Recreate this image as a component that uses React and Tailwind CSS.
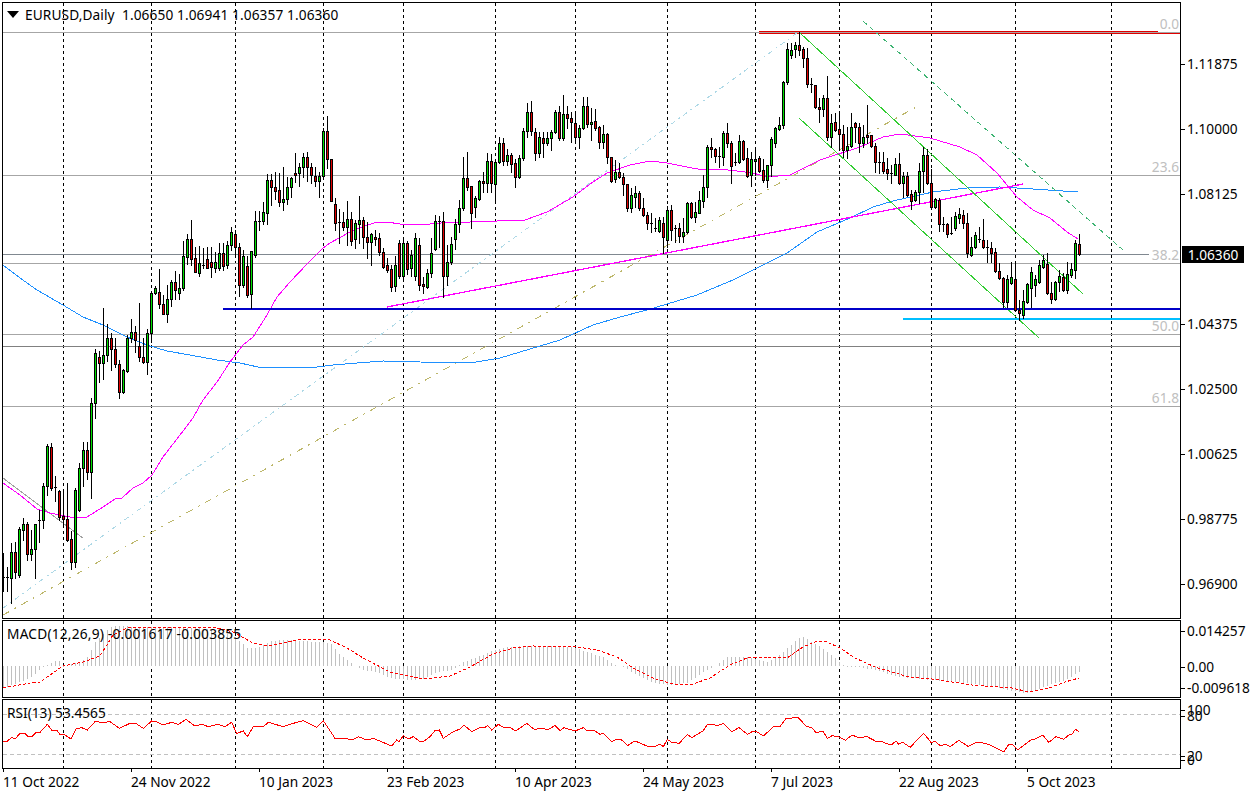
import React from 'react';

// [high, body top, body bottom, low, 1 = green / 0 = red], all in page pixels. bar k sits at x = 3 + 4k
const candles = [
  [553,577,578,591,0],[567,577,578,591,0],[543,552,578,603,1],[542,552,572,578,0],[527,529,575,577,1],[518,524,530,540,1],
  [522,524,554,560,0],[530,549,554,560,1],[524,524,549,578,1],[510,520,521,542,0],[483,486,520,528,1],[444,446,486,495,1],
  [443,447,488,490,0],[476,487,488,501,0],[490,491,517,520,0],[492,516,519,527,0],[483,519,540,541,0],[531,539,562,569,0],
  [488,490,562,567,1],[463,468,510,511,1],[442,450,468,486,1],[442,450,472,479,0],[398,403,472,498,1],[349,353,403,418,1],
  [351,357,363,382,0],[308,355,363,379,1],[324,338,355,361,1],[333,338,349,370,0],[338,349,364,367,0],[360,364,392,398,0],
  [369,370,392,393,1],[335,338,371,372,1],[319,332,338,342,1],[326,332,340,352,0],[303,346,357,361,0],[338,357,362,363,0],
  [329,333,362,374,1],[293,293,333,342,1],[286,288,293,294,1],[269,292,304,308,0],[295,304,314,314,0],[285,299,314,322,1],
  [280,282,299,306,1],[271,282,290,299,0],[274,288,293,299,1],[241,256,288,290,1],[234,239,257,264,1],[220,239,259,265,0],
  [247,258,272,272,0],[246,263,273,276,1],[248,265,266,268,0],[247,259,268,268,0],[247,262,267,277,0],[252,262,268,272,1],
  [243,253,268,270,1],[243,253,266,270,0],[241,245,265,268,1],[227,232,245,250,1],[230,234,247,255,0],[243,247,285,296,0],
  [250,256,285,287,1],[256,266,295,297,0],[251,251,294,308,1],[211,221,255,257,1],[211,221,222,230,0],[202,212,221,224,1],
  [174,180,213,224,1],[174,180,187,205,0],[172,187,191,199,0],[173,190,202,206,0],[167,199,202,210,1],[177,187,199,204,1],
  [177,178,187,197,1],[153,173,175,182,0],[163,167,173,186,1],[153,157,167,177,1],[152,157,167,181,0],[163,167,175,183,0],
  [167,176,181,186,0],[172,176,181,197,1],[128,131,176,179,1],[116,131,159,168,0],[159,159,201,201,0],[198,204,223,230,0],
  [209,222,223,243,0],[212,222,227,230,0],[201,219,227,245,1],[212,219,241,245,0],[220,223,239,248,1],[196,220,224,243,1],
  [217,220,237,248,0],[222,237,242,258,0],[233,234,242,265,1],[230,237,239,245,0],[233,238,252,255,0],[248,252,267,268,0],
  [258,265,270,272,0],[265,269,287,291,0],[256,265,286,291,1],[240,243,276,278,0],[239,243,276,280,1],[241,243,269,274,0],
  [250,255,268,276,1],[233,238,276,280,1],[238,245,285,290,0],[277,284,286,293,0],[269,273,287,288,1],[238,253,273,277,1],
  [215,221,249,250,1],[216,221,222,247,0],[212,221,276,297,0],[245,262,276,285,1],[237,244,262,264,1],[219,224,239,249,1],
  [200,208,224,232,1],[157,178,208,210,1],[152,178,187,190,0],[186,186,213,228,0],[196,198,207,217,1],[180,181,199,200,1],
  [172,181,183,192,0],[153,161,183,192,1],[154,161,183,192,0],[160,162,184,203,1],[137,143,162,163,1],[138,143,161,165,0],
  [149,155,161,165,1],[153,155,164,172,0],[159,163,177,187,0],[155,158,177,178,1],[128,131,158,160,1],[103,112,131,137,1],
  [101,112,131,135,0],[128,132,153,160,0],[132,137,153,157,1],[132,138,143,157,0],[132,138,143,145,1],[130,132,138,150,1],
  [110,112,132,133,1],[106,112,138,140,0],[95,114,138,140,1],[106,114,118,128,0],[112,118,122,142,0],[112,123,137,143,0],
  [125,128,137,148,1],[97,106,128,129,1],[97,106,124,127,0],[108,122,124,140,1],[109,121,128,130,0],[126,127,142,148,0],
  [125,134,142,148,1],[133,134,157,163,0],[157,157,181,182,0],[160,172,179,182,1],[163,172,177,178,0],[173,177,184,195,0],
  [184,184,208,211,0],[188,195,208,212,1],[186,193,197,207,1],[191,193,208,210,0],[198,208,215,216,0],[212,215,223,229,0],
  [213,223,224,232,0],[218,228,229,231,0],[217,220,231,232,1],[217,223,237,253,0],[206,210,240,247,1],[205,210,230,240,0],
  [225,228,229,242,0],[223,228,236,242,0],[218,232,236,242,1],[202,203,232,233,1],[202,203,217,218,0],[202,212,217,222,1],
  [191,200,213,213,1],[175,187,201,207,1],[145,147,187,197,1],[138,147,149,157,0],[148,149,156,162,0],[147,156,157,167,0],
  [131,133,157,165,1],[123,133,143,147,0],[141,143,166,183,0],[153,162,163,165,0],[135,141,162,163,1],[140,141,159,160,0],
  [148,158,176,177,0],[152,159,175,186,1],[150,159,161,175,1],[156,158,171,172,0],[159,170,180,182,0],[165,165,180,187,1],
  [137,139,165,176,1],[127,128,143,147,1],[117,125,129,130,1],[81,82,125,128,1],[43,49,82,84,1],[43,50,55,58,1],
  [42,45,49,57,1],[32,45,50,55,0],[47,49,58,67,0],[48,58,84,87,0],[78,84,85,92,0],[85,85,107,108,0],
  [98,107,109,122,0],[95,98,109,116,1],[76,98,137,140,0],[114,123,137,147,1],[113,122,130,131,0],[113,129,134,150,0],
  [125,134,150,157,0],[127,146,150,158,1],[113,127,146,147,1],[122,123,127,142,0],[123,127,143,152,0],[125,137,143,147,1],
  [105,135,137,143,0],[135,135,146,147,0],[143,146,162,172,0],[152,162,163,173,0],[152,162,171,173,0],[158,169,173,179,0],
  [165,173,174,183,0],[158,164,175,175,1],[153,164,183,184,0],[172,176,183,197,1],[172,176,195,196,0],[190,194,201,209,0],
  [190,192,200,201,1],[163,171,192,203,1],[147,155,171,192,1],[149,155,183,184,0],[169,183,207,208,0],[198,199,207,208,1],
  [198,200,224,231,0],[217,224,225,231,0],[223,224,234,237,0],[217,233,234,234,0],[212,216,228,230,1],[208,214,218,223,1],
  [210,215,223,228,0],[213,223,253,257,0],[237,247,255,256,1],[232,235,247,248,1],[227,239,240,242,0],[219,240,247,248,0],
  [240,247,248,262,0],[242,248,253,262,0],[248,252,271,272,0],[263,271,278,279,0],[277,278,302,307,0],[275,279,302,307,1],
  [262,277,283,284,1],[263,279,310,310,0],[300,310,313,320,0],[290,301,315,318,1],[283,284,302,303,1],[267,272,288,307,1],
  [275,279,285,296,1],[260,265,282,283,1],[255,260,267,268,1],[253,264,293,294,0],[282,293,299,303,0],[281,282,299,300,1],
  [270,276,282,291,1],[273,277,290,291,0],[262,274,290,293,1],[263,269,275,277,1],[240,243,270,278,1],[234,244,254,255,0],
];

const pinkMa = [[3,483],[20,495],[37,509],[50,513],[70,517],[87,517],[103,507],[115,499],[122,498],[133,488],[143,483],[152,475],[163,457],[180,435],[193,418],[203,400],[217,382],[230,362],[243,345],[253,337],[267,315],[277,297],[290,282],[308,263],[323,248],[330,243],[350,232],[367,225],[378,222],[387,222],[400,224],[430,224],[453,222],[470,222],[497,221],[525,220],[547,212],[573,197],[593,182],[607,173],[630,165],[650,161],[667,163],[687,167],[703,170],[720,169],[753,173],[767,177],[790,175],[820,160],[860,147],[883,137],[900,134],[930,138],[960,147],[977,155],[997,173],[1017,197],[1033,210],[1050,218],[1067,232],[1078,239]];
const blueMa = [[3,265],[20,278],[37,290],[63,305],[83,317],[103,325],[127,337],[147,345],[167,351],[190,355],[217,360],[240,363],[258,367],[317,367],[333,365],[357,363],[383,361],[420,362],[470,363],[500,358],[520,352],[560,340],[593,325],[620,317],[647,310],[667,304],[697,295],[733,280],[755,269],[787,253],[817,232],[850,218],[873,207],[893,201],[933,192],[967,188],[1000,187],[1033,189],[1078,192]];

const macdBars = [[3,688],[17,683],[30,678],[43,667],[50,663],[58,659],[62,667],[67,665],[80,662],[88,656],[95,642],[107,630],[113,626],[147,627],[200,628],[233,635],[247,648],[257,648],[270,641],[287,640],[317,642],[330,643],[340,655],[353,665],[363,670],[377,672],[390,678],[410,680],[423,679],[437,672],[453,670],[463,662],[480,656],[493,650],[507,647],[530,646],[573,647],[587,652],[603,657],[613,665],[623,667],[633,673],[653,683],[670,685],[687,683],[703,672],[713,667],[727,657],[747,657],[767,662],[783,652],[797,639],[803,637],[820,647],[835,658],[845,667],[859,667],[875,670],[899,677],[932,680],[965,683],[999,688],[1022,693],[1032,692],[1049,685],[1065,680],[1079,672]];
const macdSignal = [[3,688],[30,683],[40,682],[63,666],[83,662],[100,656],[113,635],[127,628],[213,627],[233,632],[253,643],[267,646],[283,643],[300,639],[330,640],[347,648],[363,658],[390,672],[423,679],[450,676],[470,667],[493,654],[513,648],[533,646],[577,647],[597,650],[617,657],[633,668],[653,678],[673,684],[693,684],[710,678],[730,665],[747,658],[767,657],[787,658],[803,647],[817,641],[827,642],[840,648],[855,658],[875,667],[909,677],[932,679],[972,685],[1012,688],[1029,692],[1049,688],[1065,682],[1079,678]];

const rsiA = [[8,380],[20,380],[35,367],[45,372],[60,355],[75,355],[85,365],[95,365],[108,352],[120,352],[142,328],[155,345],[170,345],[180,358],[195,360],[213,372],[228,342],[245,338],[262,345],[285,320],[310,322],[330,320],[358,340],[390,325],[410,327],[430,340],[455,318],[470,320],[490,330],[515,322],[535,328],[558,313],[585,333],[605,328],[625,335],[655,328],[675,335],[695,322],[710,355],[730,348],[742,365],[760,335],[790,335],[805,322],[850,335],[880,325],[910,317],[950,337],[970,317],[1005,370],[1035,370],[1055,375],[1075,365],[1100,375],[1120,370],[1175,393],[1190,375],[1197,380],[1210,362],[1225,372],[1240,365],[1260,380]];
const rsiB = [[10,380],[30,365],[45,347],[58,345],[70,370],[100,350],[120,342],[132,330],[155,350],[180,337],[195,337],[203,331],[215,345],[235,328],[250,337],[270,337],[287,348],[320,325],[345,345],[355,340],[385,343],[405,332],[420,347],[432,338],[465,348],[490,338],[500,346],[522,346],[540,358],[550,355],[575,380],[590,373],[605,375],[623,392],[640,380],[650,380],[685,395],[705,395],[720,387],[730,395],[742,373],[755,382],[778,385],[802,358],[815,368],[850,347],[862,328],[880,328],[890,333],[910,325],[935,350],[957,338],[982,358],[1000,348],[1010,350],[1030,363],[1050,345],[1060,335],[1080,335],[1098,310],[1135,308],[1160,335],[1175,337],[1187,352],[1210,350],[1222,370]];
const rsiC = [[0,362],[20,365],[40,376],[60,360],[80,368],[105,365],[130,378],[150,380],[170,388],[180,388],[192,378],[200,388],[212,382],[235,397],[255,375],[275,355],[297,382],[310,380],[325,392],[340,388],[355,395],[380,376],[408,394],[432,382],[450,383],[470,388],[515,411],[530,389],[540,388],[558,404],[600,372],[610,372],[632,360],[650,382],[672,365],[695,373],[710,360],[720,358],[730,343],[740,349]];
// rsi points were read off three 3x crops, back to page pixels here
const rsi = [
  ...rsiA.map(([x, y]) => [x / 3, 615 + y / 3]),
  ...rsiB.map(([x, y]) => [420 + x / 3, 615 + y / 3]),
  ...rsiC.map(([x, y]) => [832 + x / 3, 615 + y / 3]),
];

const gridX = [63, 151, 235, 323, 403, 495, 575, 667, 755, 839, 931, 1015, 1111];
const priceLabels = [['1.11875', 64], ['1.10000', 129], ['1.08125', 194], ['1.04375', 324], ['1.02500', 389], ['1.00625', 454], ['0.98775', 519], ['0.96900', 584]];
const fibLabels = [['0.0', 24], ['23.6', 167], ['38.2', 255], ['50.0', 326], ['61.8', 398]];
const macdLabels = [['0.014257', 631], ['0.00', 667], ['-0.009618', 688]];
const rsiLabels = [['100', 710], ['80', 716], ['20', 756], ['0', 760]];
const dates = [['11 Oct 2022', 3], ['24 Nov 2022', 131], ['10 Jan 2023', 259], ['23 Feb 2023', 387], ['10 Apr 2023', 515], ['24 May 2023', 643], ['7 Jul 2023', 771], ['22 Aug 2023', 899], ['5 Oct 2023', 1027]];

const pts = (list) => list.map(([x, y]) => `${x},${y}`).join(' ');

function interp(list, x) {
  for (let i = 1; i < list.length; i++) {
    if (x <= list[i][0]) {
      const [x0, y0] = list[i - 1];
      const [x1, y1] = list[i];
      return y0 + ((y1 - y0) * (x - x0)) / (x1 - x0);
    }
  }
  return list[list.length - 1][1];
}

function Grid({ y1, y2 }) {
  return gridX.map(x => (
    <line key={x} x1={x + 0.5} x2={x + 0.5} y1={y1} y2={y2} stroke="#000" strokeDasharray="3 3" />
  ));
}

function Candle({ k, c }) {
  const x = 3 + 4 * k;
  const [high, top, bot, low, up] = c;
  const h = bot - top;
  return (
    <g>
      <rect x={x} y={high} width="1" height={low - high + 1} fill="#000" />
      {h <= 1
        ? <rect x={x - 1} y={top} width="3" height="1" fill="#000" />
        : <>
            <rect x={x - 1} y={top} width="3" height={h + 1} fill="#000" />
            <rect x={x} y={top + 1} width="1" height={h - 1} fill={up ? '#00e000' : '#e00000'} />
          </>}
    </g>
  );
}

function MainChart() {
  return (
    <svg viewBox="3 3 1177 615" shapeRendering="crispEdges" className="block w-[1177px] h-[615px]">
      <Grid y1={3} y2={618} />
      {[175, 263, 334, 406].map(y => <rect key={y} x="3" y={y} width="1177" height="1" fill="#a6a6a6" />)}
      <rect x="3" y="32" width="1177" height="1" fill="#a6a6a6" />
      <rect x="3" y="254" width="1146" height="1" fill="#808890" />
      <rect x="3" y="346" width="1177" height="1" fill="#808080" />
      <rect x="759" y="31" width="399" height="1" fill="#e00000" />
      <rect x="759" y="33" width="421" height="1" fill="#e00000" />

      <line x1="3" y1="608" x2="797" y2="33" stroke="#add8e6" strokeDasharray="5 4 2 4" />
      <line x1="3" y1="615" x2="918" y2="106" stroke="#bdb76b" strokeDasharray="7 6 2 6" />
      <line x1="3" y1="478" x2="83" y2="538" stroke="#a0a0a0" />
      <polyline points={pts(blueMa)} fill="none" stroke="#1e90ff" />
      <polyline points={pts(pinkMa)} fill="none" stroke="#ff00ff" />
      <line x1="387" y1="307" x2="1023" y2="184" stroke="#ff00ff" strokeWidth="1.3" />
      <line x1="800" y1="33" x2="1083" y2="294" stroke="#32cd32" />
      <line x1="799" y1="118" x2="1039" y2="338" stroke="#32cd32" />
      <line x1="863" y1="21" x2="1123" y2="250" stroke="#3cb371" strokeDasharray="5 4" />
      <rect x="223" y="308" width="957" height="2" fill="#0000c8" />
      <rect x="903" y="318" width="277" height="2" fill="#00bfff" />

      {candles.map((c, k) => <Candle key={k} k={k} c={c} />)}
    </svg>
  );
}

function MacdChart() {
  return (
    <svg viewBox="3 621 1177 76" shapeRendering="crispEdges" className="block w-[1177px] h-[76px]">
      <Grid y1={621} y2={697} />
      {candles.map((_, k) => {
        const x = 3 + 4 * k;
        const y = interp(macdBars, x);
        return <line key={k} x1={x + 0.5} x2={x + 0.5} y1="666" y2={y} stroke="#c0c0c0" />;
      })}
      <polyline points={pts(macdSignal)} fill="none" stroke="#ff0000" strokeDasharray="3 2" />
    </svg>
  );
}

function RsiChart() {
  return (
    <svg viewBox="3 700 1177 68" shapeRendering="crispEdges" className="block w-[1177px] h-[68px]">
      <Grid y1={700} y2={768} />
      <line x1="3" x2="1180" y1="714.5" y2="714.5" stroke="#c0c0c0" strokeDasharray="4 3" />
      <line x1="3" x2="1180" y1="754.5" y2="754.5" stroke="#c0c0c0" strokeDasharray="4 3" />
      <polyline points={pts(rsi)} fill="none" stroke="#ff0000" />
    </svg>
  );
}

// right hand scale, y values are page pixels so top is relative to the row
function Axis({ labels, rowTop }) {
  return (
    <div className="relative w-[71px]">
      {labels.map(([text, y]) => (
        <div key={text} className="absolute left-0 flex items-center h-0" style={{ top: y - rowTop }}>
          <span className="w-[4px] h-px bg-black" />
          <span className="ml-[2px] whitespace-nowrap">{text}</span>
        </div>
      ))}
    </div>
  );
}

export default function App() {
  return (
    <div className="w-[1252px] h-[795px] overflow-hidden bg-white pl-[2px] pt-[2px] text-black text-[13.7px] leading-none font-['Noto_Sans',sans-serif]">
      {/* price pane */}
      <div className="flex h-[617px]">
        <div className="relative w-[1179px] border border-black">
          <MainChart />
          <div className="absolute left-[4px] top-[5px] flex items-center gap-[6px] whitespace-nowrap tracking-[0.1px]">
            <span className="w-0 h-0 border-x-[6px] border-x-transparent border-t-[7px] border-t-black" />
            <span>EURUSD,Daily&nbsp;&nbsp;1.06650 1.06941 1.06357 1.06360</span>
          </div>
          {fibLabels.map(([text, y]) => (
            <span key={text} className="absolute right-[1px] text-[#c0c0c0] -translate-y-1/2" style={{ top: y - 3 }}>{text}</span>
          ))}
        </div>
        <div className="relative">
          <Axis labels={priceLabels} rowTop={2} />
          <div className="absolute left-[1px] top-[244px] w-[62px] h-[17px] bg-black text-white flex items-center justify-center">1.06360</div>
        </div>
      </div>

      {/* macd pane */}
      <div className="flex h-[78px] mt-px">
        <div className="relative w-[1179px] border border-black">
          <MacdChart />
          <span className="absolute left-[4px] top-[6px] whitespace-nowrap tracking-[0.22px]">MACD(12,26,9) -0.001617 -0.003855</span>
        </div>
        <Axis labels={macdLabels} rowTop={620} />
      </div>

      {/* rsi pane */}
      <div className="flex h-[70px] mt-px">
        <div className="relative w-[1179px] border border-black">
          <RsiChart />
          <span className="absolute left-[4px] top-[6px] whitespace-nowrap">RSI(13) 53.4565</span>
        </div>
        <Axis labels={rsiLabels} rowTop={699} />
      </div>

      {/* time scale */}
      <div className="relative h-[26px]">
        {dates.map(([text, x]) => (
          <div key={text} className="absolute top-0 flex flex-col items-start" style={{ left: x - 2 }}>
            <span className="w-px h-[3px] bg-black" />
            <span className="mt-[3px] whitespace-nowrap">{text}</span>
          </div>
        ))}
      </div>
    </div>
  );
}
